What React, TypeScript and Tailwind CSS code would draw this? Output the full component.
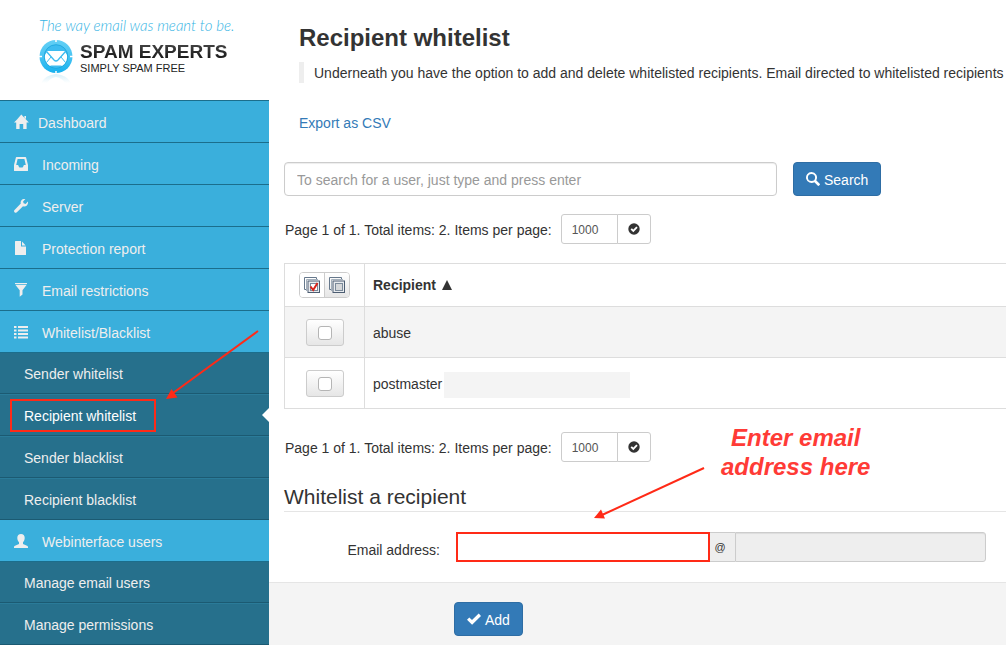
import type { ReactNode } from "react";

function Glyph({ children, className = "" }: { children: ReactNode; className?: string }) {
  return (
    <svg viewBox="0 0 14 14" aria-hidden="true" fill="currentColor" className={`h-[14px] w-[14px] shrink-0 ${className}`}>
      {children}
    </svg>
  );
}

const icons = {
  home: (
    <path d="M7.300 -.4 L14.800 7.600 H12.600 V14 H9.200 V9 H5.600 V14 H2.200 V7.600 H0 L3 4.400Z M10.400 1 H12 V4 L10.400 2.400Z" />
  ),
  inbox: (
    <path fillRule="evenodd" d="M2.6 0 H11.4 Q12 0 12.1 .6 L14 8 V13.4 Q14 14 13.4 14 H.6 Q0 14 0 13.4 V8 L1.9 .6 Q2 0 2.6 0Z M3.6 2 L2.2 8 H4.1 L5 10 Q5.2 10.4 5.6 10.4 H8.4 Q8.8 10.4 9 10 L9.9 8 H11.8 L10.4 2Z" />
  ),
  wrench: (
    <path d="M13.9 2.6 L11.6 4.9 L9.6 4.3 L9.1 2.4 L11.4 .1 C9.9 -.3 8.2 .2 7.3 1.4 C6.6 2.4 6.5 3.6 6.8 4.6 L.5 10.9 C-.1 11.5 -.1 12.5 .5 13.2 C1.2 13.9 2.3 13.9 2.9 13.3 L9 7.2 C10.300 7.7 11.900 7.400 12.900 6.400 C13.900 5.400 14.300 3.900 13.900 2.600Z" />
  ),
  file: <path d="M1.6 0 H7 V5.4 H12 V13.500 Q12 14 11.500 14 H1.500 Q1 14 1 13.500 V.6 Q1 0 1.600 0Z M8 .4 L11.700 4.400 H8Z" />,
  filter: <path d="M1 0 H13 V1 H1Z M1.300 1.700 H12.700 L8.500 7.200 V11.500 L5.700 13.700 V7.200Z" />,
  list: (
    <path d="M0 1 H2.500 V3 H0Z M4 1 H14 V3 H4Z M0 4.500 H2.500 V6.500 H0Z M4 4.500 H14 V6.500 H4Z M0 8 H2.500 V10 H0Z M4 8 H14 V10 H4Z M0 11.500 H2.500 V13.500 H0Z M4 11.500 H14 V13.500 H4Z" />
  ),
  user: (
    <path d="M7 0 C9.300 0 10.700 1.600 10.700 3.800 C10.700 5.700 10.200 7.300 9 8.200 V9.900 L13 11.700 Q14 12.200 14 13 V14 H0 V13 Q0 12.200 1 11.700 L5 9.900 V8.200 C3.800 7.300 3.300 5.700 3.300 3.800 C3.300 1.600 4.700 0 7 0Z" />
  ),
};

function Logo() {
  return (
    <a href="#home" className="block h-[100px] bg-white pt-[17px] pl-[39px] no-underline">
      <span className="block pb-[6px] font-[Lato] text-[15px] leading-4 font-light whitespace-nowrap text-[#35b4e4] italic">
        The way email was meant to be.
      </span>
      <span className="flex items-start gap-[7px]">
        <svg viewBox="0 0 34 46" aria-hidden="true" className="h-[46px] w-[34px] shrink-0">
          <defs>
            <linearGradient id="ring" x1="0" y1="0" x2="0" y2="1">
              <stop offset="0" stopColor="#62cff5" />
              <stop offset="0.45" stopColor="#4dc6f3" />
              <stop offset="1" stopColor="#16b0ee" />
            </linearGradient>
            <linearGradient id="shade" x1="0" y1="0" x2="0" y2="1">
              <stop offset="0" stopColor="#a9dff3" />
              <stop offset="1" stopColor="#ffffff" />
            </linearGradient>
          </defs>
          <path d="M2 44 Q6 36 17 35 Q28 36 32 44 L26 44 Q23 39 17 38 Q11 39 8 44Z" fill="url(#shade)" opacity="0.45" />
          <circle cx="17" cy="17.500" r="16.500" fill="url(#ring)" />
          <circle cx="17" cy="17.500" r="11.800" fill="#3dbcf0" stroke="#1ba3da" strokeWidth="0.800" />
          <path d="M8.500 12 H25.500 L28 16 A11.200 11.200 0 0 1 23 27 H11 A11.200 11.200 0 0 1 6 16Z" fill="#fff" />
          <path d="M11.500 27 Q17 30 22.500 27 L22.500 26.500 H11.500Z" fill="#3dbcf0" />
          <path d="M7.500 12.500 L15 21 Q17 23 19 21 L26.500 12.500" fill="none" stroke="#3dbcf0" strokeWidth="1.300" />
          <path d="M7.500 23.500 L12 18 M26.500 23.500 L22 18" fill="none" stroke="#3dbcf0" strokeWidth="1" />
          <path d="M17 0 V3 M17 32 V35 M0 17.500 H3 M31 17.500 H34" stroke="#fff" strokeWidth="1.500" />
        </svg>
        <span className="block pt-[3px] whitespace-nowrap">
          <span className="block bg-gradient-to-b from-[#4a4a4a] to-[#111] bg-clip-text text-[19px] leading-5 font-bold text-transparent">
            SPAM EXPERTS
          </span>
          <span className="block text-[11px] leading-3 text-[#222]">SIMPLY SPAM FREE</span>
        </span>
      </span>
    </a>
  );
}

function MenuItem({ icon, label, gap = "gap-[14px]" }: { icon: ReactNode; label: string; gap?: string }) {
  return (
    <a href="#menu" className={`flex h-[42px] items-center border-b border-[#1b6e8c] bg-[#3aafdc] pl-[14px] pt-[3px] text-[#eee] ${gap}`}>
      <Glyph className="mb-[3px] overflow-visible">{icon}</Glyph>
      <span>{label}</span>
    </a>
  );
}

function SubMenu({ items, active }: { items: string[]; active?: string }) {
  return (
    <ul>
      {items.map((item) => (
        <li
          key={item}
          className="relative border-t border-b border-t-[#2a7b99] border-b-[#1b5a72] bg-[#26708c] first:border-t-0"
        >
          <a
            href="#submenu"
            className={`flex h-10 items-center pt-[2px] pl-6 ${item === active ? "text-white" : "text-[#eee]"}`}
          >
            {item}
          </a>
          {item === active && (
            <>
              <span className="absolute top-1 left-[10px] h-[33px] w-[146px] border-2 border-[#ff2a17]" />
              <svg viewBox="0 0 7 14" aria-hidden="true" className="absolute top-[13px] right-0 h-[14px] w-[7px]">
                <path d="M7 0 V14 L0 7Z" fill="#fff" />
              </svg>
            </>
          )}
        </li>
      ))}
    </ul>
  );
}

function Pager({ id }: { id: string }) {
  return (
    <form className="flex h-[30px] items-center pl-4">
      <label htmlFor={id} className="pt-[2px] pr-[9px] whitespace-nowrap">
        Page 1 of 1. Total items: 2. Items per page:
      </label>
      <input
        id={id}
        defaultValue="1000"
        className="h-[30px] w-[57px] rounded-l-[3px] border border-[#ccc] bg-white px-[10px] pt-[2px] text-[12px] text-[#555]"
      />
      <button type="button" aria-label="Apply" className="-ml-px flex h-[30px] w-[34px] items-center justify-center rounded-r-[3px] border border-[#ccc] bg-white text-[#333]">
        <svg viewBox="0 0 12 12" aria-hidden="true" className="h-3 w-3">
          <circle cx="6" cy="6" r="5.700" fill="currentColor" />
          <path d="M3.200 5.800 L5.300 7.900 L9 4.200" fill="none" stroke="#fff" strokeWidth="1.900" />
        </svg>
      </button>
    </form>
  );
}

function StackIcon({ checked }: { checked?: boolean }) {
  return (
    <svg viewBox="0 0 16 16" aria-hidden="true" className="h-4 w-4">
      <path d="M3 12.500 H.5 V.5 H12.500 V3" fill="none" stroke="#66788c" />
      <path d="M2.500 14 V2.500 H14" fill="none" stroke="#a3afbb" />
      <rect x="4" y="4" width="11.500" height="11.500" fill="#e8ebee" stroke="#4c5d72" />
      <rect x="6.500" y="6.500" width="7" height="7" fill={checked ? "#fff" : "#d5d7d9"} stroke="#7b8a9a" />
      {checked && <path d="M6.500 9.500 L9.200 13 L13.500 6" fill="none" stroke="#d8241b" strokeWidth="2" />}
    </svg>
  );
}

function RecipientRow({ name, striped, masked }: { name: string; striped?: boolean; masked?: boolean }) {
  return (
    <tr className={`h-[51px] ${striped ? "bg-[#f4f4f4]" : "bg-white"}`}>
      <td className="border border-[#ddd] p-0">
        <label className="mx-auto flex h-[27px] w-[38px] items-center justify-center rounded-[3px] border border-[#ccc] bg-gradient-to-b from-white to-[#e6e6e6] pt-px">
          <input
            type="checkbox"
            aria-label={`Select ${name}`}
            className="h-[14px] w-[14px] appearance-none rounded-[3px] border border-[#b5b5b5] bg-white"
          />
        </label>
      </td>
      <td className="border border-[#ddd] py-0 pr-0 pl-2">
        <div className="flex items-center gap-[2px]">
          <span className="pt-px">{name}</span>
          {masked && <span className="mt-[4px] h-[26px] w-[186px] bg-[#f4f4f4]" />}
        </div>
      </td>
    </tr>
  );
}

export default function App() {
  return (
    <div className="relative flex min-h-screen overflow-hidden bg-white font-['Liberation_Sans',Arial,sans-serif] text-[14px] leading-5 text-[#333]">
      <aside className="w-[269px] shrink-0 bg-[#26708c]">
        <Logo />
        <nav className="border-t border-[#1b6e8c]">
          <MenuItem icon={icons.home} label="Dashboard" gap="gap-[10px]" />
          <MenuItem icon={icons.inbox} label="Incoming" />
          <MenuItem icon={icons.wrench} label="Server" />
          <MenuItem icon={icons.file} label="Protection report" />
          <MenuItem icon={icons.filter} label="Email restrictions" />
          <MenuItem icon={icons.list} label="Whitelist/Blacklist" />
          <SubMenu
            items={["Sender whitelist", "Recipient whitelist", "Sender blacklist", "Recipient blacklist"]}
            active="Recipient whitelist"
          />
          <MenuItem icon={icons.user} label="Webinterface users" />
          <SubMenu items={["Manage email users", "Manage permissions"]} />
        </nav>
      </aside>

      <main className="flex min-w-0 flex-1 flex-col">
        <header className="pt-6 pl-[30px]">
          <h1 className="text-[24px] leading-7 font-bold">Recipient whitelist</h1>
          <p className="mt-[10px] overflow-hidden border-l-[5px] border-[#eee] pt-px pl-[10px] whitespace-nowrap">
            Underneath you have the option to add and delete whitelisted recipients. Email directed to whitelisted recipients
          </p>
          <a href="#export" className="mt-[30px] inline-block text-[#337ab7]">
            Export as CSV
          </a>
        </header>

        <form className="mt-[29px] flex gap-4 pr-4 pl-[15px]">
          <input
            aria-label="Search for a user"
            placeholder="To search for a user, just type and press enter"
            className="h-[34px] max-w-[493px] min-w-0 flex-1 rounded-[4px] border border-[#ccc] bg-white px-3 pt-[2px] shadow-[inset_0_1px_1px_rgba(0,0,0,0.075)] placeholder:text-[#999]"
          />
          <button type="button" className="flex h-[34px] items-center gap-1 rounded-[4px] border border-[#2e6da4] bg-[#337ab7] px-3 text-white">
            <Glyph>
              <path fillRule="evenodd" d="M5.500 0 A5.500 5.500 0 0 1 10.200 8.300 L13.700 11.800 Q14.200 12.400 13.700 12.900 L13 13.600 Q12.400 14.200 11.900 13.700 L8.400 10.200 A5.500 5.500 0 1 1 5.500 0Z M5.500 1.900 A3.600 3.600 0 1 0 5.500 9.100 A3.600 3.600 0 1 0 5.500 1.900Z" />
            </Glyph>
            <span className="pt-[2px]">Search</span>
          </button>
        </form>

        <div className="pt-[18px]">
          <Pager id="items-top" />
        </div>

        <div className="mt-[19px] -mr-px ml-[15px]">
          <table className="w-full table-fixed border-collapse">
            <colgroup>
              <col className="w-20" />
              <col />
            </colgroup>
            <thead>
              <tr className="h-[43px]">
                <th className="border border-[#ddd] p-0">
                  <div className="mx-auto flex h-[26px] w-[51px] rounded-[4px] border border-[#ccc]">
                    <button type="button" aria-label="Select all" className="flex flex-1 items-center justify-center rounded-l-[3px] border-r border-[#ccc] bg-white">
                      <StackIcon checked />
                    </button>
                    <button type="button" aria-label="Select none" className="flex flex-1 items-center justify-center rounded-r-[3px] bg-gradient-to-b from-white to-[#e6e6e6]">
                      <StackIcon />
                    </button>
                  </div>
                </th>
                <th className="border border-[#ddd] py-0 pr-0 pl-2 text-left font-bold">
                  <span className="flex items-center gap-[6px]">
                    Recipient
                    <svg viewBox="0 0 10 10" aria-hidden="true" className="h-[10px] w-[10px]">
                      <path d="M5 0 L10 10 H0Z" fill="#333" />
                    </svg>
                  </span>
                </th>
              </tr>
            </thead>
            <tbody>
              <RecipientRow name="abuse" striped />
              <RecipientRow name="postmaster" masked />
            </tbody>
          </table>
        </div>

        <div className="pt-[23px]">
          <Pager id="items-bottom" />
        </div>

        <form className="flex flex-1 flex-col">
          <h2 className="mt-[23px] ml-[15px] border-b border-[#e5e5e5] pb-[2px] text-[21px] leading-6">
            Whitelist a recipient
          </h2>
          <div className="mt-5 flex h-[30px] items-center pr-5">
            <label htmlFor="email" className="w-[171px] shrink-0 pt-[6px] text-right">
              Email address:
            </label>
            <input
              id="email"
              className="ml-4 h-[30px] min-w-0 flex-1 border-2 border-[#ff2a17] bg-white px-2 text-[12px] outline-none"
            />
            <span className="flex h-[30px] w-[25px] shrink-0 items-center border-y border-[#ccc] bg-[#eee] pl-[5px] text-[11px] text-[#333]">
              @
            </span>
            <input
              aria-label="Domain"
              disabled
              className="h-[30px] min-w-0 flex-1 rounded-r-[3px] border border-[#ccc] bg-[#eee] px-2 text-[12px] shadow-[inset_0_1px_1px_rgba(0,0,0,0.075)]"
            />
          </div>
          <footer className="mt-5 flex-1 border-t border-[#e5e5e5] bg-[#f4f4f4] pt-[19px] pl-[185px]">
            <button type="button" className="flex h-[34px] items-center gap-1 rounded-[4px] border border-[#2e6da4] bg-[#337ab7] px-3 text-white">
              <Glyph>
                <path d="M0 7.800 L2.300 5.500 L5 8.100 L11.700 1.600 L14 3.900 L5.100 12.800Z" />
              </Glyph>
              <span className="pt-[2px]">Add</span>
            </button>
          </footer>
        </form>
      </main>

      <svg viewBox="0 0 96 70" aria-hidden="true" className="pointer-events-none absolute top-[330px] left-[164px] h-[70px] w-24">
        <path d="M94 1 L9 63" stroke="#ff2a17" strokeWidth="2" />
        <path d="M2 69 L7.500 59 L13.500 67.500Z" fill="#ff2a17" />
      </svg>
      <svg viewBox="0 0 112 54" aria-hidden="true" className="pointer-events-none absolute top-[466px] left-[593px] h-[54px] w-28">
        <path d="M111 2 L9 49" stroke="#ff2a17" strokeWidth="2" />
        <path d="M1 52 L8 43.500 L12 52.500Z" fill="#ff2a17" />
      </svg>
      <p className="absolute top-[423px] left-[721px] text-center text-[24px] leading-[29px] font-bold whitespace-nowrap text-[#ff3b36] italic">
        Enter email
        <br />
        address here
      </p>
    </div>
  );
}
